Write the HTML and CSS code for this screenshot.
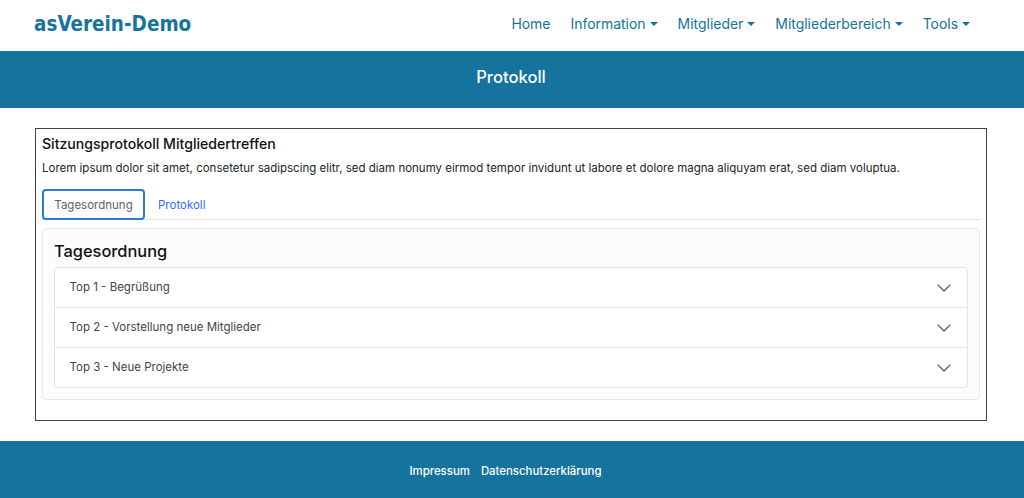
FILE: index.html
```html
<!DOCTYPE html>
<html lang="de">
<head>
<meta charset="utf-8">
<title>Protokoll</title>
<link rel="stylesheet" href="styles.css">
</head>
<body>
<nav class="navbar">
  <a class="brand" href="#">asVerein-Demo</a>
  <ul class="menu">
    <li><a href="#">Home</a></li>
    <li><a class="drop" href="#">Information</a></li>
    <li><a class="drop" href="#">Mitglieder</a></li>
    <li><a class="drop" href="#">Mitgliederbereich</a></li>
    <li><a class="drop" href="#">Tools</a></li>
  </ul>
</nav>
<header class="banner"><h1>Protokoll</h1></header>
<main class="box">
  <h2 class="title">Sitzungsprotokoll Mitgliedertreffen</h2>
  <p class="lead">Lorem ipsum dolor sit amet, consetetur sadipscing elitr, sed diam nonumy eirmod tempor invidunt ut labore et dolore magna aliquyam erat, sed diam voluptua.</p>
  <div class="tabs">
    <a class="tab active" href="#">Tagesordnung</a>
    <a class="tab" href="#">Protokoll</a>
  </div>
  <section class="card">
    <h3>Tagesordnung</h3>
    <div class="accordion">
      <div class="row"><span>Top 1 - Begrüßung</span><svg class="chev" viewBox="0 0 16 16"><path d="M1.6 4.6 8 11l6.4-6.4" fill="none" stroke="#444" stroke-width="1.1"/></svg></div>
      <div class="row"><span>Top 2 - Vorstellung neue Mitglieder</span><svg class="chev" viewBox="0 0 16 16"><path d="M1.6 4.6 8 11l6.4-6.4" fill="none" stroke="#444" stroke-width="1.1"/></svg></div>
      <div class="row"><span>Top 3 - Neue Projekte</span><svg class="chev" viewBox="0 0 16 16"><path d="M1.6 4.6 8 11l6.4-6.4" fill="none" stroke="#444" stroke-width="1.1"/></svg></div>
    </div>
  </section>
</main>
<footer class="footer">
  <a href="#">Impressum</a>
  <a href="#">Datenschutzerklärung</a>
</footer>
</body>
</html>
```
FILE: styles.css
```css
* { box-sizing: border-box; }
html, body { margin: 0; padding: 0; }
body { font-family: Inter, "Liberation Sans", sans-serif; color: #212529; background: #fff; height: 498px; overflow: hidden; }
a { text-decoration: none; }

.navbar { height: 51px; display: flex; align-items: center; justify-content: space-between; padding: 0 54px 5px 34px; }
.brand { font-family: "DejaVu Sans Condensed", sans-serif; font-weight: 700; font-size: 22px; color: #15739d; display: inline-block; transform: scaleX(.93); transform-origin: left center; }
.menu { list-style: none; margin: 0; padding: 0; display: flex; gap: 20px; }
.menu a { color: #15739d; font-size: 13.95px; }
.drop::after { content: ""; display: inline-block; margin-left: 4px; vertical-align: 3px; border-top: 4.5px solid currentColor; border-left: 4.5px solid transparent; border-right: 4.5px solid transparent; }

.banner { height: 57px; background: #15739d; display: flex; align-items: center; justify-content: center; }
.banner h1 { margin: 0 2px 6px 0; color: #fff; font-size: 16.6px; font-weight: 500; }

.box { margin: 20px 37px 20px 35px; height: 293px; border: 1px solid #444; padding: 6px 6px 0; }
.title { margin: 0; font-size: 14.1px; font-weight: 500; line-height: 18px; color: #111; }
.lead { margin: 7px 0 0; font-size: 11.5px; line-height: 16px; color: #212529; white-space: nowrap; }

.tabs { display: flex; margin-top: 13px; height: 31px; border-bottom: 1px solid #dee2e6; }
.tab { font-size: 11.5px; padding: 0 13px; display: flex; align-items: center; color: #2f6ffb; height: 31px; }
.tab.active { color: #5c636a; border: 2px solid #2a7bd6; border-radius: 4px; width: 103px; justify-content: center; padding: 0; background: #fff; }

.card { margin-top: 8px; background: #fcfcfc; border: 1px solid #e5e7e9; border-radius: 4px; padding: 11px 11px 11px; height: 172px; }
.card h3 { margin: 0 0 5px; font-size: 16.4px; font-weight: 500; line-height: 22px; color: #111; }
.accordion { border: 1px solid #e2e4e6; border-radius: 4px; background: #fff; }
.row { height: 40px; display: flex; align-items: center; justify-content: space-between; padding: 0 15px 2px 14.5px; font-size: 11.5px; color: #444; border-bottom: 1px solid #e2e4e6; }
.row:last-child { border-bottom: 0; height: 39px; }
.chev { width: 16px; height: 16px; margin-top: 2px; }

.footer { height: 57px; background: #15739d; display: flex; align-items: center; justify-content: center; gap: 11px; padding: 2px 13px 0 0; }
.footer a { color: #fff; font-size: 11.4px; font-weight: 500; }
```
